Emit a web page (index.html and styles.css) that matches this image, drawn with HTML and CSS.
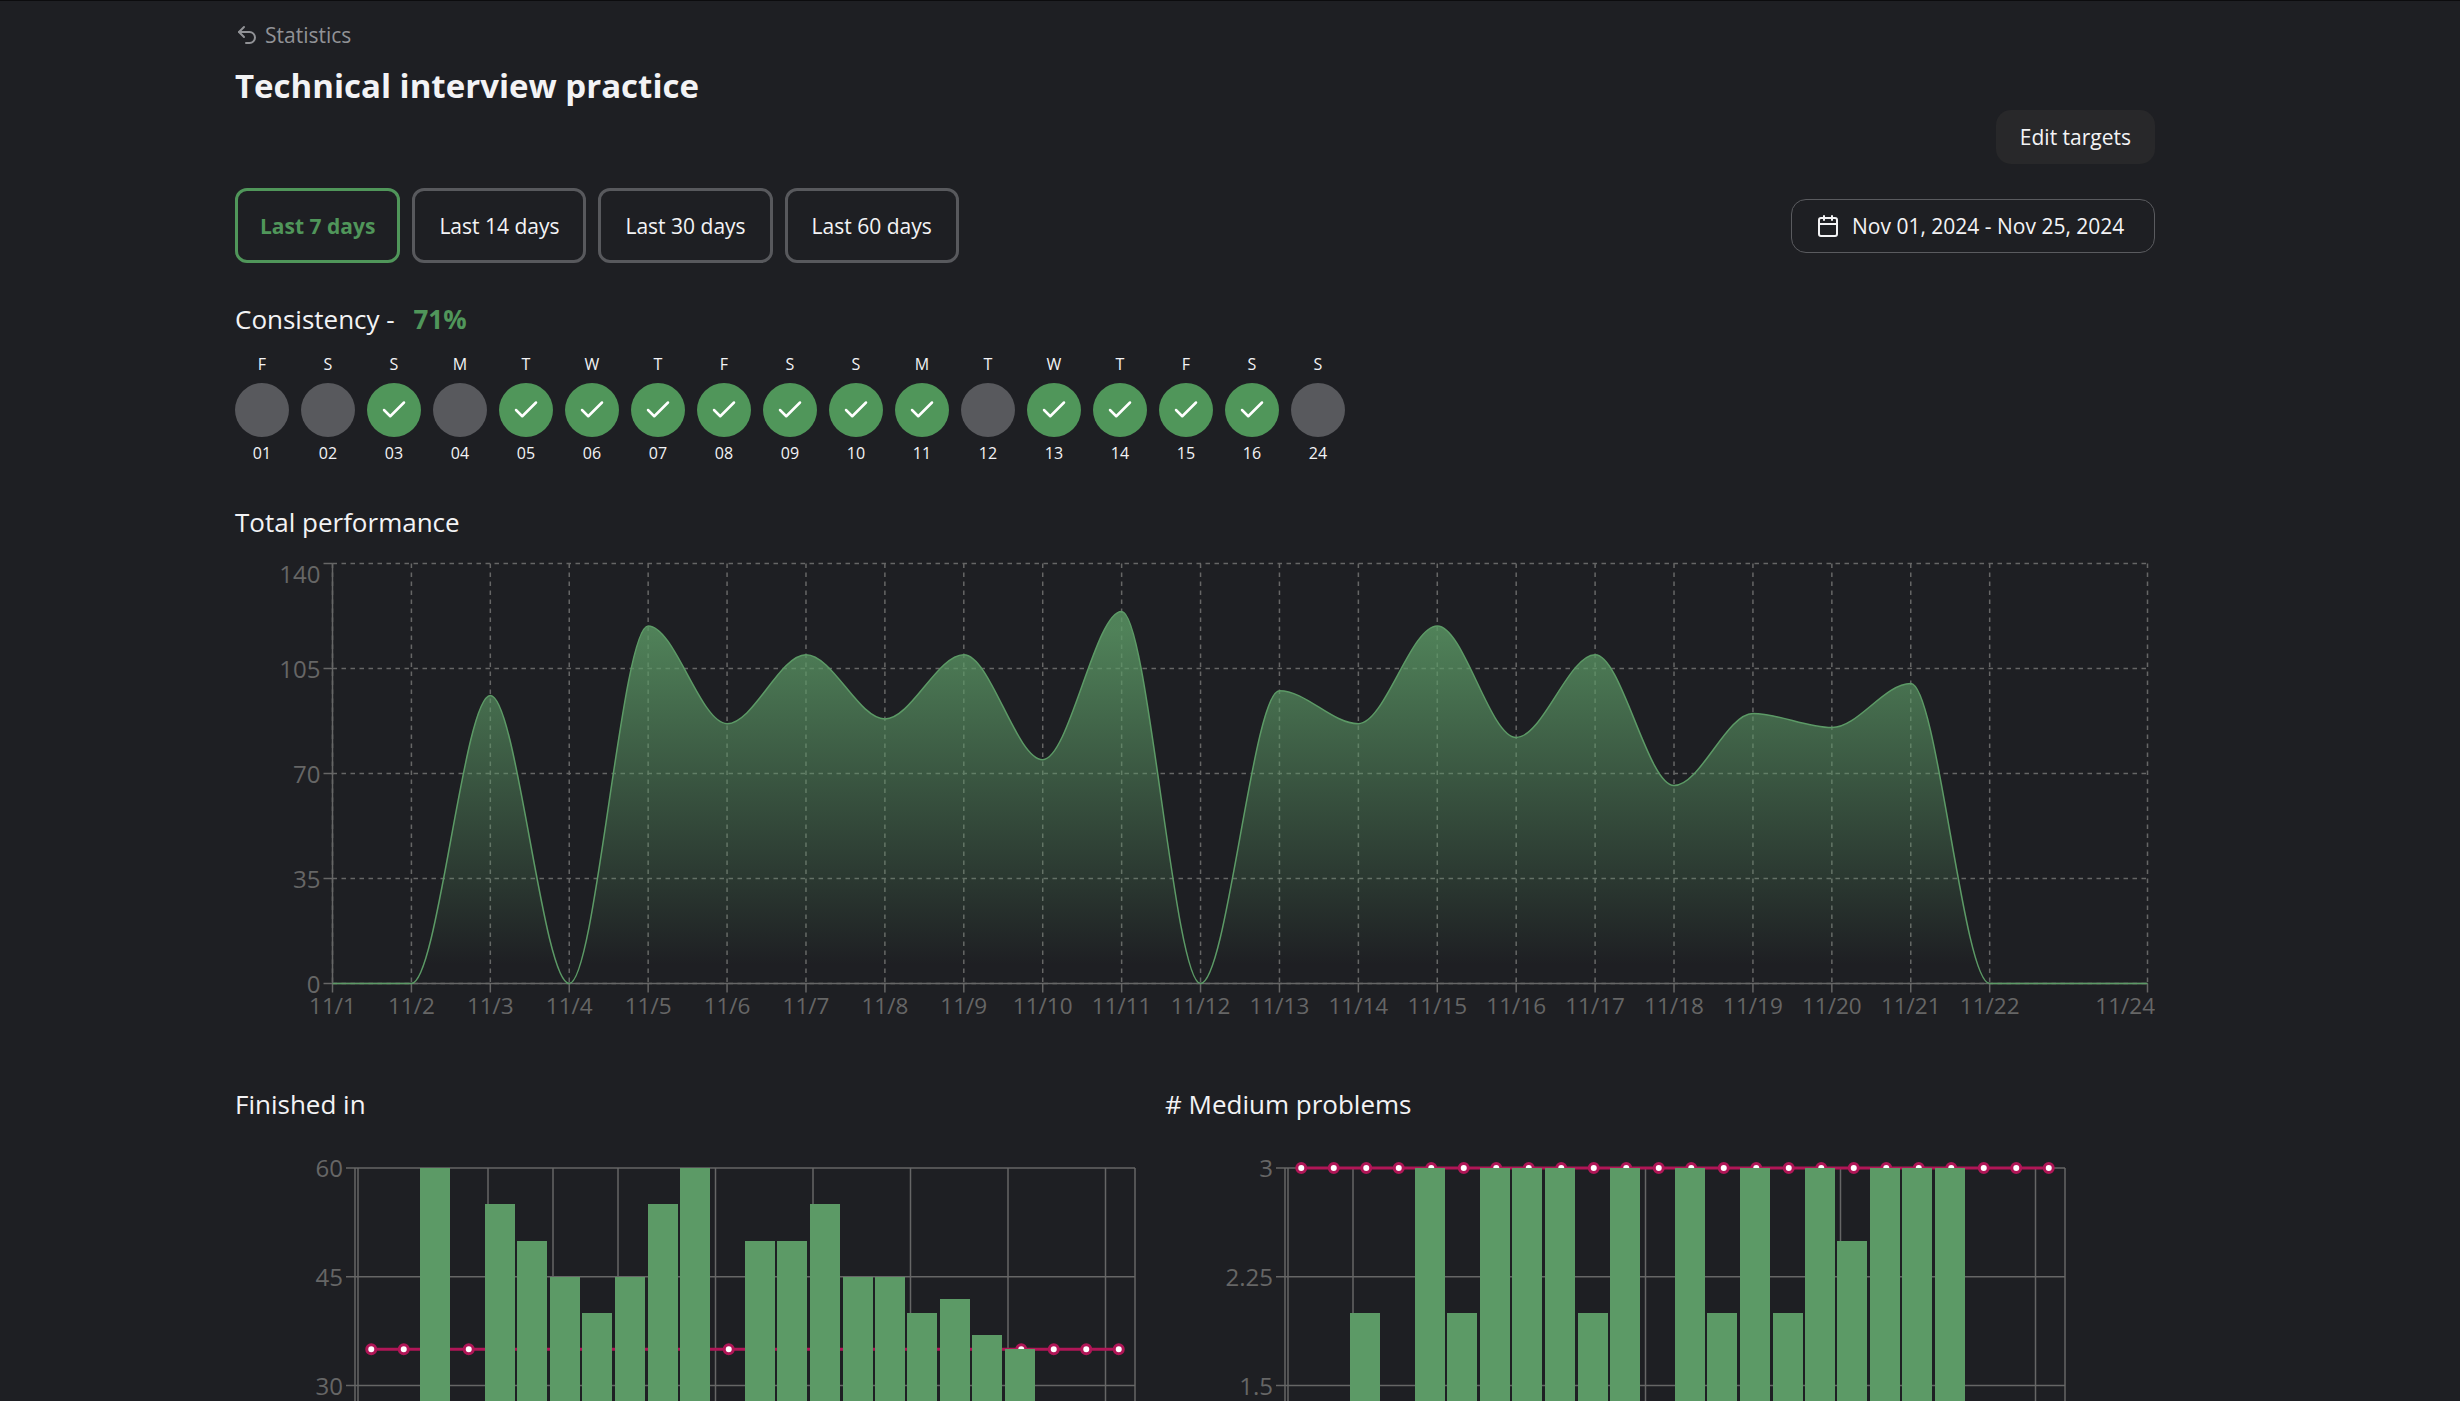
FILE: index.html
```
<!DOCTYPE html>
<html lang="en">
<head>
  <meta charset="utf-8">
  <meta name="viewport" content="width=device-width, initial-scale=1">
  <title>Technical interview practice</title>
  <link rel="stylesheet" href="styles.css">
</head>
<body>
  <main class="page">
    <header class="page-header">
      <a class="back-link" href="#statistics">
        <svg class="icon" viewBox="0 0 24 24" aria-hidden="true"><path d="M9 14 4 9l5-5"/><path d="M4 9h10.500a5.500 5.500 0 0 1 0 11H11"/></svg>
        Statistics
      </a>
      <h1 class="page-title">Technical interview practice</h1>
      <button class="button button-muted" type="button">Edit targets</button>
    </header>

    <div class="toolbar">
      <div class="ranges" role="group" aria-label="Range">
        <button class="range range-active" type="button" aria-pressed="true">Last 7 days</button>
        <button class="range" type="button" aria-pressed="false">Last 14 days</button>
        <button class="range" type="button" aria-pressed="false">Last 30 days</button>
        <button class="range" type="button" aria-pressed="false">Last 60 days</button>
      </div>
      <button class="button button-outline" type="button">
        <svg class="icon" viewBox="0 0 24 24" aria-hidden="true"><rect x="3" y="4" width="18" height="18" rx="2"/><path d="M16 2v4M8 2v4M3 10h18"/></svg>
        Nov 01, 2024 - Nov 25, 2024
      </button>
    </div>

    <section class="consistency">
      <h2 class="section-title">Consistency - <span class="score">71%</span></h2>
      <ol class="days" id="days"></ol>
    </section>

    <section class="performance">
      <h2 class="section-title">Total performance</h2>
      <svg class="chart" id="performance" viewBox="0 0 1280 320" role="img" aria-label="Total performance per day"></svg>
    </section>

    <div class="metrics">
      <section class="metric">
        <h2 class="section-title">Finished in</h2>
        <svg class="chart" id="finished" viewBox="0 0 620 360" role="img" aria-label="Finished in, per day"></svg>
      </section>
      <section class="metric">
        <h2 class="section-title"># Medium problems</h2>
        <svg class="chart" id="medium" viewBox="0 0 620 360" role="img" aria-label="Medium problems per day"></svg>
      </section>
    </div>
  </main>
  <script src="charts.js"></script>
</body>
</html>
```
FILE: styles.css
```
*,
*::before,
*::after {
  box-sizing: border-box;
}

html {
  height: 100%;
}

body {
  height: 100%;
  margin: 0;
  padding: 0 70px 0 0;
  overflow-y: auto;
  scrollbar-width: none;
  border-top: 1px solid #0c0c0e;
  background: #1e1f23;
  color: #f3f3f5;
  font-family: "Open Sans", "Noto Sans", sans-serif;
  font-size: 21px;
  line-height: 24px;
}

/* soft shade along the bottom edge of the window */
body::after {
  content: "";
  position: fixed;
  bottom: 0;
  left: 25%;
  width: 24%;
  height: 30px;
  background: radial-gradient(closest-side at 50% 100%, rgba(0, 0, 0, 0.1), transparent);
  pointer-events: none;
}

.page {
  max-width: 1920px;
  margin: 0 auto;
  padding: 22px 0 48px;
}

.icon {
  flex: none;
  width: 24px;
  height: 24px;
  fill: none;
  stroke: currentColor;
  stroke-width: 2;
  stroke-linecap: round;
  stroke-linejoin: round;
}

.page-header {
  display: flex;
  flex-direction: column;
  align-items: flex-start;
}

.page-header .button {
  align-self: flex-end;
}

.back-link {
  display: flex;
  align-items: center;
  gap: 6px;
  color: #919296;
  text-decoration: none;
}

.page-title {
  margin: 15px 0 0;
  font-size: 33px;
  font-weight: 700;
  line-height: 48px;
}

.button {
  display: flex;
  align-items: center;
  gap: 12px;
  height: 54px;
  padding: 0 24px;
  border: 0;
  border-radius: 15px;
  color: inherit;
  font: inherit;
}

.button-muted {
  background: #28282a;
}

.button-outline {
  min-width: 364px;
  border: 1px solid #5a5b5f;
  background: transparent;
}

.toolbar {
  display: flex;
  flex-wrap: wrap;
  align-items: center;
  justify-content: space-between;
  gap: 12px;
  margin-top: 24px;
}

.ranges {
  display: flex;
  flex-wrap: wrap;
  gap: 12px;
}

.range {
  height: 75px;
  padding: 0 24px;
  border: 3px solid #58595d;
  border-radius: 12px;
  background: transparent;
  color: inherit;
  font: inherit;
}

.range-active {
  padding: 0 22px;
  border-color: #50965a;
  color: #50965a;
  font-weight: 700;
}

.section-title {
  margin: 0;
  font-size: 26px;
  font-weight: 500;
  line-height: 36px;
}

.score {
  margin-left: 12px;
  color: #50965a;
  font-weight: 700;
}

.consistency {
  margin-top: 38px;
}

.days {
  display: flex;
  flex-wrap: wrap;
  gap: 12px;
  margin: 17px 0 0;
  padding: 0;
  list-style: none;
}

.day {
  display: flex;
  flex-direction: column;
  align-items: center;
  width: 54px;
  font-size: 16px;
  line-height: 20px;
}

.day-mark {
  display: flex;
  align-items: center;
  justify-content: center;
  width: 54px;
  height: 54px;
  margin: 9px 0 6px;
  border-radius: 50%;
  background: #58595d;
  color: #fff;
}

.day-done {
  background: #50965a;
}

.day-mark .icon {
  width: 30px;
  height: 30px;
}

.performance {
  margin-top: 41px;
}

.chart {
  display: block;
  width: 100%;
  height: auto;
  margin-top: 16px;
}

.metrics {
  display: grid;
  grid-template-columns: 1fr 1fr;
  margin-top: 50px;
  padding-right: 60px;
}

.line {
  stroke: #666;
  fill: none;
}

.dashed {
  stroke-dasharray: 3 3;
}

.label {
  fill: #666;
  font-size: 16px;
  text-anchor: end;
}

.day-label {
  font-size: 15px;
}

.middle {
  text-anchor: middle;
}

.curve {
  fill: none;
  stroke: #5c9a66;
}

.bar {
  fill: #5c9a66;
  shape-rendering: crispEdges;
}

.target {
  stroke: #b01657;
  stroke-width: 2;
}

.dot {
  fill: #fff;
  stroke: #b01657;
  stroke-width: 2;
}
```
FILE: charts.js
```
const line = (x1, y1, x2, y2, cls = "line") =>
  `<line class="${cls}" x1="${x1}" y1="${y1}" x2="${x2}" y2="${y2}"/>`;
const label = (x, y, text, cls = "label") =>
  `<text class="${cls}" x="${x}" y="${y}">${text}</text>`;

function drawDays() {
  const letters = "FSSMTWTFSSMTWTFSS";
  const dates = [1, 2, 3, 4, 5, 6, 7, 8, 9, 10, 11, 12, 13, 14, 15, 16, 24];
  const missed = [1, 2, 4, 12, 24];
  const check = '<svg class="icon" viewBox="0 0 24 24" role="img" aria-label="done"><path d="M20 6 9 17l-5-5"/></svg>';
  document.getElementById("days").innerHTML = dates.map((date, i) => {
    const done = !missed.includes(date);
    return `<li class="day"><span>${letters[i]}</span>` +
      `<span class="day-mark${done ? " day-done" : ""}">${done ? check : ""}</span>` +
      `<span>${String(date).padStart(2, "0")}</span></li>`;
  }).join("");
}

function drawPerformance() {
  const values = [0, 0, 96, 0, 119.2, 86.6, 109.6, 88.2, 109.6, 74.6, 124, 0, 97.6, 86.6, 119.2, 82, 109.6, 66, 90, 85.3, 100, 0, 0, 0];
  const left = 65, right = 1275, top = 5, bottom = 285;
  const step = (right - left) / (values.length - 1);
  const x = i => left + i * step;
  const y = v => bottom - v * 2;
  let out = '<defs><linearGradient id="fade" x1="0" y1="0" x2="0" y2="1">' +
    '<stop offset="5%" stop-color="#5c9a66" stop-opacity="0.8"/>' +
    '<stop offset="95%" stop-color="#5c9a66" stop-opacity="0"/></linearGradient></defs>';

  for (const v of [0, 35, 70, 105, 140]) out += line(left, y(v), right, y(v), "line dashed");
  values.forEach((v, i) => {
    if (i !== 22) out += line(x(i), top, x(i), bottom, "line dashed");
  });

  out += line(left, bottom, right, bottom) + line(left, top, left, bottom);
  for (const v of [0, 35, 70, 105, 140]) {
    out += line(left - 6, y(v), left, y(v));
    out += label(left - 8, v === 140 ? 18 : y(v) + 6, v);
  }
  values.forEach((v, i) => {
    if (i === 22) return;
    out += line(x(i), bottom, x(i), bottom + 6);
    out += i === 23
      ? label(1280, 305, "11/24", "label day-label")
      : label(x(i), 305, `11/${i + 1}`, "label day-label middle");
  });

  // every day is a local extremum, so the tangents are horizontal
  let path = `M${x(0)} ${y(values[0])}`;
  for (let i = 1; i < values.length; i++) {
    path += `C${x(i - 1) + step / 3} ${y(values[i - 1])} ${x(i) - step / 3} ${y(values[i])} ${x(i)} ${y(values[i])}`;
  }
  out += `<path fill="url(#fade)" d="${path}V${bottom}H${left}Z"/><path class="curve" d="${path}"/>`;
  document.getElementById("performance").innerHTML = out;
}

function drawBars(id, values, ticks, max, target) {
  const left = 80, right = 600, top = 20, bottom = 310;
  const band = (right - left) / values.length;
  const y = v => bottom - (v / max) * (bottom - top);
  const barX = i => Math.floor((left + i * band) * 2) / 2;
  let out = "";

  for (const t of ticks) out += line(left, y(t), right, y(t));
  for (const i of [0, 2, 4, 6, 8, 11, 14, 17, 20, 23]) {
    out += line(left + i * band + 2, top, left + i * band + 2, bottom);
  }
  out += line(right, top, right, bottom) + line(left, top, left, bottom) + line(left, bottom, right, bottom);
  for (const t of ticks) {
    out += line(left - 6, y(t), left, y(t));
    out += label(left - 8, y(t) + 6, t);
  }

  out += line(left + band / 2, y(target), right - band / 2, y(target), "target");
  values.forEach((v, i) => {
    out += `<circle class="dot" cx="${left + (i + 0.5) * band}" cy="${y(target)}" r="3"/>`;
  });
  values.forEach((v, i) => {
    if (v) out += `<rect class="bar" x="${barX(i)}" y="${y(v)}" width="20" height="${bottom - y(v)}"/>`;
  });
  document.getElementById(id).innerHTML = out;
}

drawDays();
drawPerformance();
drawBars("finished",
  [0, 0, 60, 0, 55, 50, 45, 40, 45, 55, 60, 0, 50, 50, 55, 45, 45, 40, 42, 37, 35, 0, 0, 0],
  [30, 45, 60], 60, 35);
drawBars("medium",
  [0, 0, 2, 0, 3, 2, 3, 3, 3, 2, 3, 0, 3, 2, 3, 2, 3, 2.5, 3, 3, 3, 0, 0, 0],
  [1.5, 2.25, 3], 3, 3);
```
